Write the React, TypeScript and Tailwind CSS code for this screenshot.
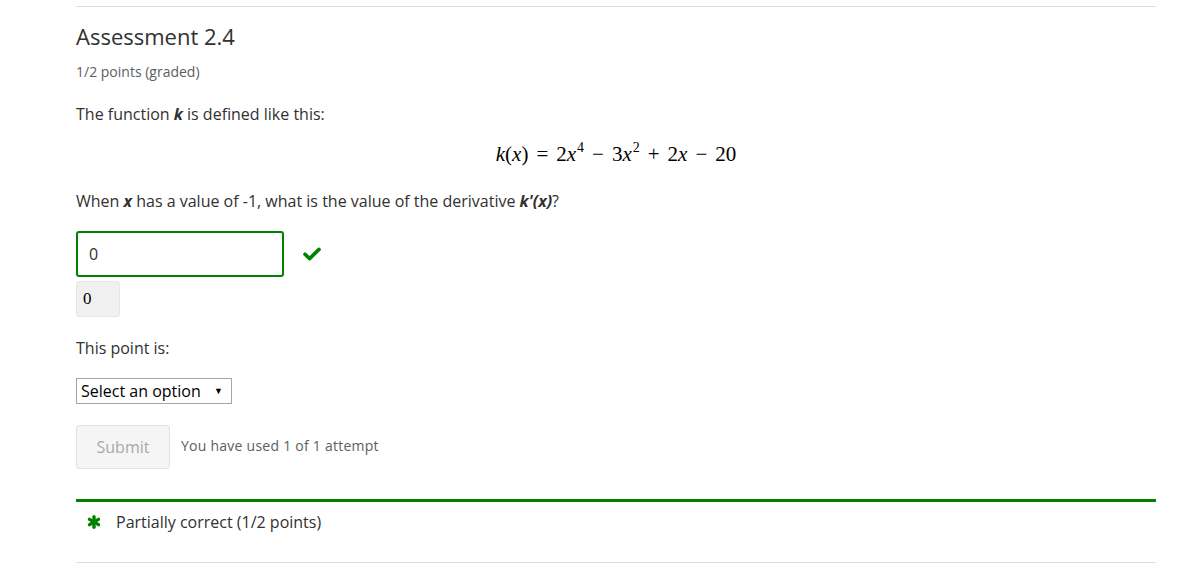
import React from 'react';

const CheckMark: React.FC = () => (
  <svg width="18" height="14" viewBox="0 0 18 14" className="ml-[19px]">
    <path d="M2 7.2 L6.6 11.6 L16 2.4" fill="none" stroke="#008100" strokeWidth="3.6" strokeLinecap="round" strokeLinejoin="round" />
  </svg>
);

const Asterisk: React.FC = () => (
  <svg width="14" height="14" viewBox="0 0 14 14">
    <g stroke="#008100" strokeWidth="3.4" strokeLinecap="round">
      <line x1="7" y1="1.8" x2="7" y2="12.2" />
      <line x1="2.5" y1="4.4" x2="11.5" y2="9.6" />
      <line x1="2.5" y1="9.6" x2="11.5" y2="4.4" />
    </g>
  </svg>
);

const App: React.FC = () => {
  return (
    <div className="bg-white w-[1196px] h-[568px] overflow-hidden font-['Open_Sans',sans-serif] text-[#313131]">
      <div className="mx-[76px] w-[1080px] pt-[6px]">
        <div className="border-t border-[#dddddd]" />

        <h2 className="mt-[14px] text-[22px] leading-[30px] text-[#313131] font-normal">Assessment 2.4</h2>
        <div className="mt-[11px] text-[14px] leading-[20px] text-[#5e5e5e]">1/2 points (graded)</div>

        <p className="mt-[20px] text-[16px] leading-[24px]">
          The function <b><i>k</i></b> is defined like this:
        </p>

        <div className="mt-[14px] h-[30px] flex justify-center items-center text-[21px] font-['Liberation_Serif',serif] text-black">
          <span className="whitespace-nowrap">
            <i>k</i>(<i>x</i>)<span className="mx-[8px]">=</span>2<i>x</i>
            <span className="relative -top-[9px] text-[14px] ml-[1px]">4</span>
            <span className="mx-[8px]">−</span>3<i>x</i>
            <span className="relative -top-[9px] text-[14px] ml-[1px]">2</span>
            <span className="mx-[8px]">+</span>2<i>x</i>
            <span className="mx-[8px]">−</span>20
          </span>
        </div>

        <p className="mt-[19px] text-[16px] leading-[24px]">
          When <b><i>x</i></b> has a value of -1, what is the value of the derivative <b><i>k'(x)</i></b>?
        </p>

        <div className="mt-[18px] flex items-center">
          <div className="w-[208px] h-[46px] border-2 border-[#008100] rounded-[3px] flex items-center pl-[11px] text-[16px] text-[#313131]">
            0
          </div>
          <CheckMark />
        </div>
        <div className="mt-[4px] w-[44px] h-[36px] bg-[#f0f0f0] border border-[#e6e6e6] rounded-[3px] flex items-center px-[6px] text-[17px] font-['Liberation_Serif',serif] text-black">
          0
        </div>

        <p className="mt-[19px] text-[16px] leading-[24px]">This point is:</p>

        <div className="mt-[18px] w-[156px] h-[26px] border border-[#a6a6a6] flex items-center justify-between pl-[4px] pr-[8px] text-[16px] text-black">
          <span>Select an option</span>
          <span className="text-[9px]">▼</span>
        </div>

        <div className="mt-[21px] flex items-center">
          <div className="w-[94px] h-[44px] bg-[#f5f5f5] border border-[#e2e2e2] rounded-[3px] flex items-center justify-center text-[16px] text-[#a8a8a8]">
            Submit
          </div>
          <span className="ml-[11px] text-[14px] tracking-[0.25px] text-[#5e5e5e] -mt-[3px]">You have used 1 of 1 attempt</span>
        </div>

        <div className="mt-[30px] border-t-[3px] border-[#008100]" />
        <div className="h-[40px] flex items-center pl-[11px]">
          <Asterisk />
          <span className="ml-[15px] text-[16px] text-[#313131]">Partially correct (1/2 points)</span>
        </div>
        <div className="mt-[20px] border-t border-[#dddddd]" />
      </div>
    </div>
  );
};

export default App;
